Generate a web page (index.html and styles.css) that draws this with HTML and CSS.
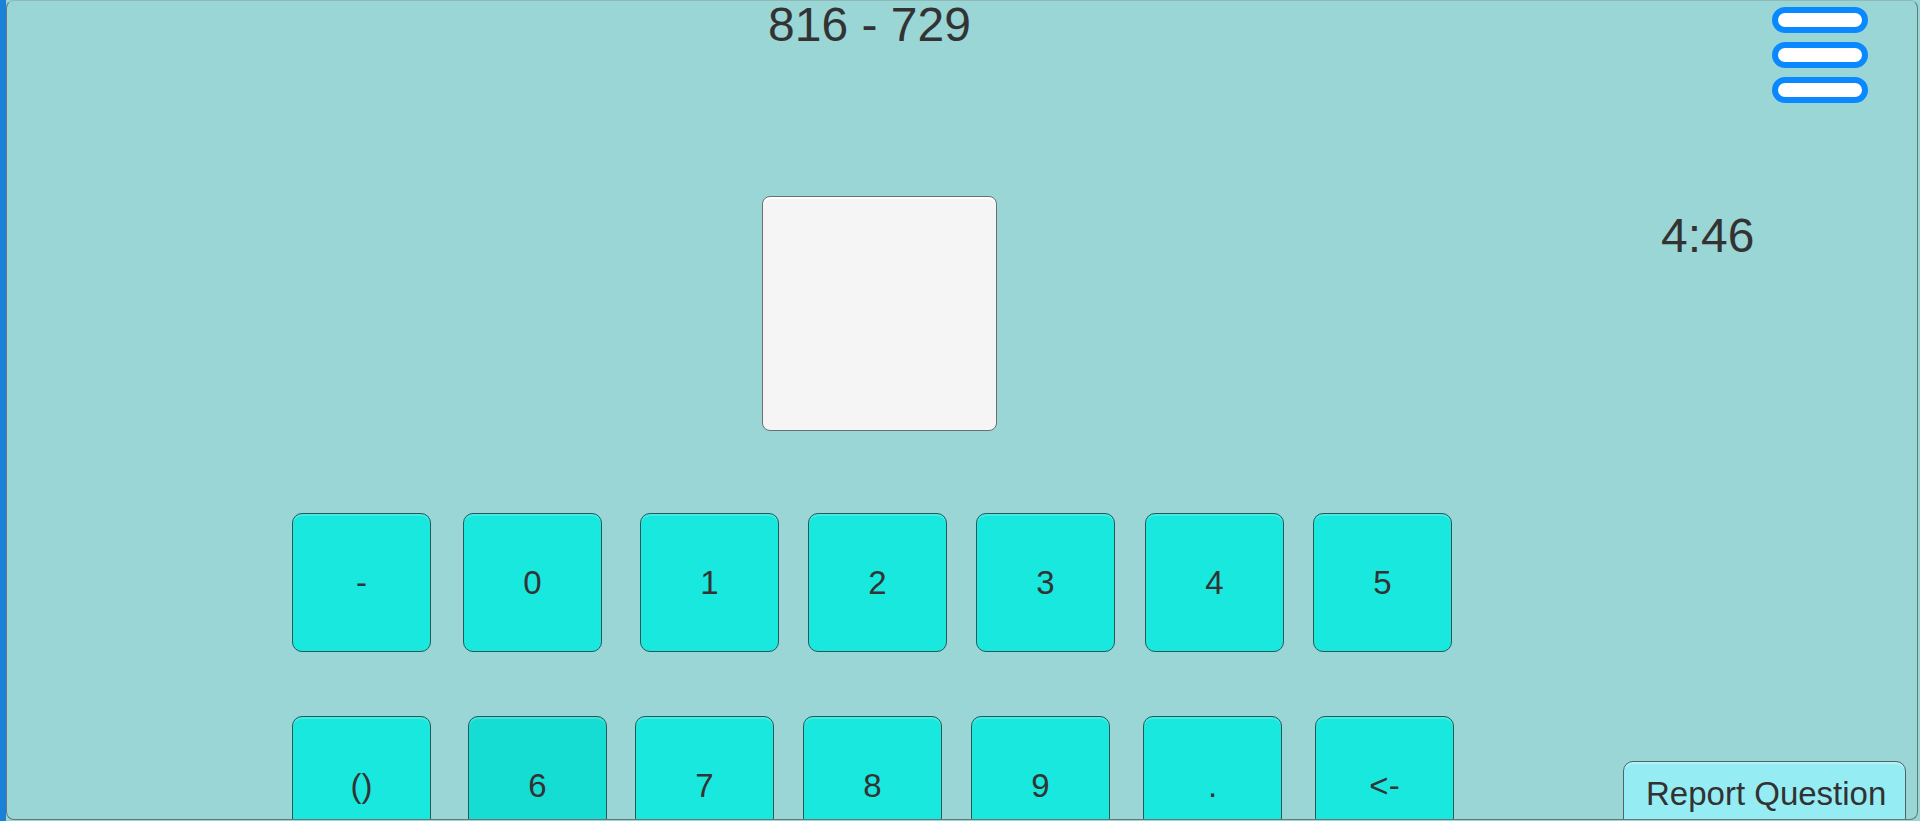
FILE: index.html
```html
<!DOCTYPE html>
<html>
<head>
<meta charset="utf-8">
<link rel="stylesheet" href="styles.css">
</head>
<body>
<div class="screen">
  <div class="sidebar"></div>
  <div class="panel">
    <div class="header">
      <div class="title">816 - 729</div>
      <div class="menu">
        <div class="pill"></div>
        <div class="pill"></div>
        <div class="pill"></div>
      </div>
    </div>
    <div class="middle">
      <div class="answer"></div>
      <div class="timer">4:46</div>
    </div>
    <div class="keypad">
      <div class="row row1">
        <div class="key">-</div>
        <div class="key">0</div>
        <div class="key">1</div>
        <div class="key">2</div>
        <div class="key">3</div>
        <div class="key">4</div>
        <div class="key">5</div>
      </div>
      <div class="row row2">
        <div class="key">()</div>
        <div class="key key-dark">6</div>
        <div class="key">7</div>
        <div class="key">8</div>
        <div class="key">9</div>
        <div class="key">.</div>
        <div class="key">&lt;-</div>
      </div>
    </div>
    <div class="report">Report Question</div>
  </div>
</div>
</body>
</html>
```
FILE: styles.css
```css
html, body {
  margin: 0;
  padding: 0;
  width: 1920px;
  height: 821px;
  overflow: hidden;
  background: #9ad6d6;
  font-family: "Liberation Sans", Arial, sans-serif;
  color: #323232;
}

.screen {
  display: flex;
  height: 821px;
}

.sidebar {
  width: 6px;
  height: 821px;
  background: #1a80d8;
  flex: none;
}

.panel {
  position: relative;
  box-sizing: border-box;
  width: 1912px;
  height: 820px;
  border: 1px solid #657777;
  border-top-color: #8fb8b8;
  border-radius: 8px;
  background: #9ad6d6;
  overflow: hidden;
  display: flex;
  flex-direction: column;
}

.header {
  display: flex;
  align-items: flex-start;
  height: 102px;
  flex: none;
}

.title {
  margin-left: 761px;
  font-size: 48px;
  line-height: 48px;
  color: #333;
}

.menu {
  margin-left: auto;
  margin-right: 49px;
  margin-top: 6px;
  display: flex;
  flex-direction: column;
  gap: 9px;
}

.pill {
  box-sizing: border-box;
  width: 96px;
  height: 26px;
  border: 6px solid #0a88ff;
  border-radius: 13px;
  background: #ffffff;
}

.middle {
  display: flex;
  align-items: flex-start;
  margin-top: 93px;
  flex: none;
}

.answer {
  box-sizing: border-box;
  width: 235px;
  height: 235px;
  margin-left: 755px;
  background: #f5f5f5;
  border: 1px solid #6e6e6e;
  border-radius: 8px;
  box-shadow: inset 0 2px 0 #ffffff;
}

.timer {
  margin-left: 664px;
  margin-top: 16px;
  font-size: 48px;
  line-height: 48px;
  color: #333;
}

.keypad {
  display: flex;
  flex-direction: column;
  gap: 64px;
  margin-top: 82px;
  margin-left: 285px;
}

.row {
  display: flex;
  gap: 29px;
}

.key {
  box-sizing: border-box;
  width: 139px;
  height: 139px;
  flex: none;
  display: flex;
  align-items: center;
  justify-content: center;
  background: #19e8de;
  border: 1px solid #285858;
  border-radius: 10px;
  box-shadow: inset 0 2px 0 rgba(255, 255, 255, 0.18);
  font-size: 33px;
  color: #333;
}

.key-dark {
  background: #16ddd4;
}

.row1 .key:nth-child(2) { margin-left: 3px; }
.row1 .key:nth-child(3) { margin-left: 9px; }
.row1 .key:nth-child(6) { margin-left: 1px; }

.row2 .key:nth-child(2) { margin-left: 8px; }
.row2 .key:nth-child(3) { margin-left: -1px; }
.row2 .key:nth-child(6) { margin-left: 4px; }
.row2 .key:nth-child(7) { margin-left: 4px; }

.report {
  position: absolute;
  left: 1616px;
  top: 760px;
  box-sizing: border-box;
  width: 283px;
  height: 80px;
  padding-top: 15px;
  padding-left: 22px;
  background: #96ecf3;
  border: 1px solid #4f6464;
  border-radius: 10px;
  box-shadow: inset 0 2px 0 rgba(255, 255, 255, 0.3);
  font-size: 33px;
  line-height: 33px;
  color: #323232;
  white-space: nowrap;
}
```
